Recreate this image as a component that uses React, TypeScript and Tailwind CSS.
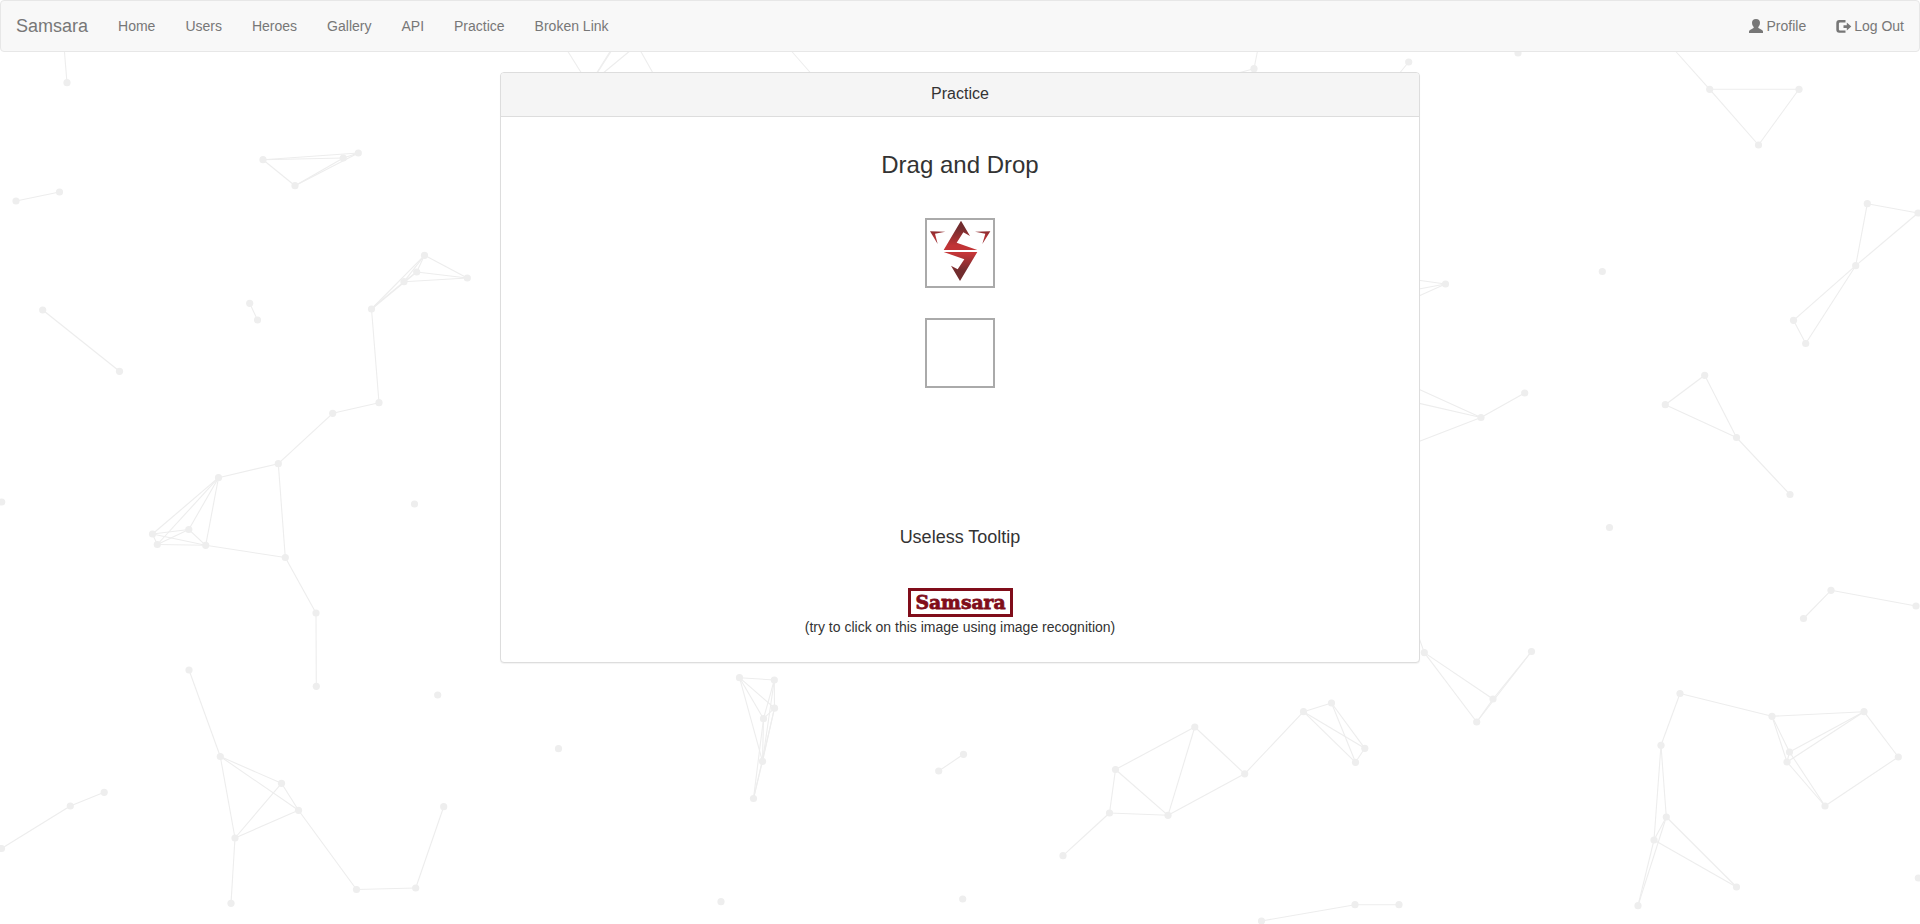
import React from "react";

type Point = [number, number];
type Segment = [number, number, number, number];

const nodes: Point[] = [
  [67, 82.7], [263, 159.7], [343.3, 158], [358.3, 153], [295, 185.7], [16, 201], [59.5, 192],
  [424.5, 255.3], [416.7, 272], [404, 281.7], [467.3, 278], [371.5, 309], [42.7, 310], [119.5, 371.3],
  [249.7, 303.3], [257.5, 320], [379, 402.7], [332.7, 413.3], [278.3, 463.7], [218.5, 477.7],
  [1.7, 502], [414.5, 504], [152.5, 534], [157.3, 544.5], [188.8, 529.5], [205.7, 545.3], [285.3, 557.5],
  [316, 613], [316.3, 686.3], [437.7, 695], [189, 670], [220.3, 756.5], [281.5, 783.3], [298.5, 810.3],
  [235, 838], [231, 903.3], [356.5, 889.5], [415.7, 888], [443.7, 806.7], [70.3, 806], [104.2, 792.3],
  [1.5, 848.5], [739.5, 677.7], [774.3, 680], [774.5, 708.2], [763.5, 718.7], [762.5, 761.3],
  [753.5, 798.5], [558.5, 748.7], [938.7, 771], [963.5, 754.3], [721, 901.7], [962.7, 899],
  [1194.8, 727], [1115.5, 769.5], [1109.5, 813], [1168, 815.3], [1063, 855.7], [1244.7, 773.8],
  [1303.5, 711.7], [1331.5, 703], [1364.8, 748.3], [1355.5, 762.3], [1261.5, 921], [1355, 904.7],
  [1399, 904.7], [1424.3, 652.6], [1518, 53], [1709.7, 89.3], [1799, 89.3], [1758.5, 145],
  [1867.3, 203.7], [1918, 213], [1855.7, 265.7], [1793.5, 320.3], [1805.7, 343.5], [1602.3, 271.5],
  [1445.5, 284], [1481, 417.5], [1524.7, 393], [1704.7, 375.3], [1665.3, 404.7], [1736.5, 437.5],
  [1790, 494.5], [1609.5, 527.5], [1831, 590.3], [1803.5, 618.5], [1916, 606], [1531.5, 651.5],
  [1493, 699], [1476.7, 722], [1680, 693.5], [1661, 745.3], [1772, 716.3], [1864, 711.7],
  [1898.3, 757], [1789.5, 752], [1787, 762], [1825, 806], [1666.3, 817], [1654, 840], [1736.5, 887],
  [1638, 905.7], [1918.3, 878], [1254, 68.7], [1408.7, 62],
];

// Pairs of indices into `nodes`.
const links: Point[] = [
  [1, 2], [1, 3], [1, 4], [2, 3], [2, 4], [3, 4], [5, 6],
  [7, 8], [7, 9], [7, 10], [7, 11], [8, 9], [8, 10], [8, 11], [9, 10], [9, 11],
  [12, 13], [14, 15], [11, 16], [16, 17], [17, 18], [18, 19], [18, 26],
  [19, 22], [19, 23], [19, 24], [19, 25], [22, 23], [22, 24], [22, 25], [23, 24], [23, 25], [24, 25],
  [25, 26], [26, 27], [27, 28], [30, 31], [31, 32], [31, 33], [31, 34], [32, 33], [32, 34], [33, 34],
  [34, 35], [33, 36], [36, 37], [37, 38], [39, 40], [39, 41],
  [42, 43], [42, 44], [42, 45], [42, 46], [43, 44], [43, 45], [43, 46], [44, 45], [44, 46], [44, 47],
  [45, 46], [45, 47], [46, 47], [49, 50],
  [53, 54], [53, 56], [53, 58], [54, 55], [54, 56], [55, 56], [55, 57], [56, 58], [58, 59],
  [59, 60], [59, 61], [59, 62], [60, 61], [60, 62], [61, 62], [63, 64], [64, 65],
  [68, 69], [68, 70], [69, 70], [71, 72], [71, 73], [72, 73], [73, 74], [73, 75], [74, 75],
  [78, 79], [80, 81], [80, 82], [81, 82], [82, 83], [85, 86], [85, 87],
  [66, 89], [66, 90], [88, 89], [88, 90], [89, 90],
  [91, 92], [91, 93], [93, 94], [93, 96], [93, 97], [94, 95], [94, 96], [94, 97], [95, 98],
  [96, 97], [96, 98], [97, 98], [92, 99], [92, 100], [99, 100], [99, 101], [99, 102], [100, 101], [100, 102],
];

// Edges whose far end is hidden behind the navbar or the panel.
const looseEnds: Segment[] = [
  [64.3, 50, 67, 82.7], [567, 50, 582, 74], [611, 50, 596, 74], [612, 50, 596.5, 74],
  [631, 50, 602, 74], [640, 50, 653.5, 74], [790.5, 50, 811.5, 74],
  [1257.7, 50, 1254, 68.7], [1254, 68.7, 1238, 73], [1408.7, 62, 1398, 75],
  [1674.5, 50, 1709.7, 89.3], [1415, 279.7, 1445.5, 284], [1415, 289.8, 1445.5, 284],
  [1415, 297.8, 1445.5, 284], [1415, 387.6, 1481, 417.5], [1415, 402.4, 1481, 417.5],
  [1415, 443, 1481, 417.5], [1418, 635, 1424.3, 652.6],
];

function Constellation() {
  return (
    <svg className="absolute inset-0 h-full w-full" viewBox="0 0 1920 924" aria-hidden="true">
      <g stroke="#ededed" strokeWidth="1.1">
        {links.map(([a, b], i) => (
          <line key={i} x1={nodes[a][0]} y1={nodes[a][1]} x2={nodes[b][0]} y2={nodes[b][1]} />
        ))}
        {looseEnds.map(([x1, y1, x2, y2], i) => (
          <line key={i} x1={x1} y1={y1} x2={x2} y2={y2} />
        ))}
      </g>
      <g fill="#eeeeee">
        {nodes.map(([x, y], i) => (
          <circle key={i} cx={x} cy={y} r="3.6" />
        ))}
      </g>
    </svg>
  );
}

function UserIcon() {
  return (
    <svg className="mr-[3px] h-3.5 w-3.5" viewBox="0 0 14 14" fill="currentColor">
      <path d="M7 0C4.300 0 3 1.500 3 3.700c0 1.200.3 2.300.9 3.200.5.700.9 1 .9 1.600 0 .5-.4.800-1.100 1.100L1 10.900C.3 11.300 0 11.700 0 12.400V14h14v-1.600c0-.7-.3-1.100-1-1.500l-2.700-1.300C9.600 9.300 9.200 9 9.200 8.500c0-.6.4-.9.900-1.600.6-.9.900-2 .9-3.200C11 1.500 9.700 0 7 0z" />
    </svg>
  );
}

function LogOutIcon() {
  return (
    <svg className="mr-1 h-3.5 w-3.5 overflow-visible" viewBox="0 0 14 14" fill="currentColor">
      <path d="M9.500 1H3.300Q.3 1 .3 4v6.800Q.3 13.800 3.300 13.800h6.200V11.500H4Q2.900 11.500 2.900 10.400V4.500Q2.900 3.400 4 3.400h5.500z" />
      <path d="M10.800 3.500 15.300 7.600 10.800 11.600V9H7.500V6.200h3.300z" />
    </svg>
  );
}

function DragLogo() {
  return (
    <svg className="h-[66px] w-[66px]" viewBox="81 60 198 198">
      <defs>
        <linearGradient id="upper" x1="0" y1="0" x2="0" y2="1">
          <stop offset="0.250" stopColor="#712c2e" />
          <stop offset="0.850" stopColor="#c13436" />
        </linearGradient>
        <linearGradient id="lower" x1="0" y1="0" x2="0" y2="1">
          <stop offset="0.050" stopColor="#c53638" />
          <stop offset="0.650" stopColor="#712c2e" />
        </linearGradient>
        <linearGradient id="wing" x1="0" y1="0" x2="0" y2="1">
          <stop offset="0" stopColor="#8c2c2f" />
          <stop offset="0.500" stopColor="#b53235" />
          <stop offset="1" stopColor="#8c2c2f" />
        </linearGradient>
      </defs>
      <path fill="url(#upper)" d="M183 62 210 108 190 97 170 128 232 150H131z" />
      <path fill="url(#lower)" d="M131 156H232L180 243 153 197 173 208 193 178z" />
      <path fill="url(#wing)" d="M90 94 136 95 105 101 113 132z" />
      <path fill="url(#wing)" d="M271 94 225 95 256 101 247 132z" />
    </svg>
  );
}

const menu = ["Home", "Users", "Heroes", "Gallery", "API", "Practice", "Broken Link"];

export default function App() {
  return (
    <div className="relative h-[924px] w-full overflow-hidden bg-white font-['Liberation_Sans',Arial,sans-serif] text-sm leading-5 text-[#333333]">
      <Constellation />
      <div className="relative">
        <nav className="mb-5 flex h-[52px] items-center justify-between rounded border border-[#e7e7e7] bg-[#f8f8f8] px-[15px] text-[#777777]">
          <div className="flex items-center">
            <a className="mr-[15px] text-lg leading-5">Samsara</a>
            <ul className="flex">
              {menu.map((item) => (
                <li key={item} className="px-[15px]">{item}</li>
              ))}
            </ul>
          </div>
          <ul className="flex gap-[30px]">
            <li className="flex items-center"><UserIcon />Profile</li>
            <li className="flex items-center"><LogOutIcon />Log Out</li>
          </ul>
        </nav>

        <main className="mx-auto flex h-[591px] w-[920px] flex-col rounded border border-[#dddddd] bg-white text-center shadow-[0_1px_1px_rgba(0,0,0,0.05)]">
          <header className="flex h-11 shrink-0 items-center justify-center rounded-t-[3px] border-b border-[#dddddd] bg-[#f5f5f5] pb-0.5 text-base">
            Practice
          </header>
          <section className="flex flex-col items-center pt-[35px]">
            <h3 className="text-2xl leading-[26px]">Drag and Drop</h3>
            <div className="mt-10 h-[70px] w-[70px] border-2 border-[#aaaaaa]">
              <DragLogo />
            </div>
            <div className="mt-[30px] h-[70px] w-[70px] border-2 border-[#aaaaaa]" />
          </section>
          <section className="mt-[139px] flex flex-col items-center">
            <h4 className="text-lg leading-5">Useless Tooltip</h4>
            <div className="mt-[41px] flex h-[29px] w-[105px] items-center justify-center border-[3px] border-[#800d1a] font-['DejaVu_Serif',serif] text-[19px] leading-none font-bold text-[#800d1a]">
              <svg className="h-[23px] w-[99px]" viewBox="0 0 99 23">
                <text x="4.500" y="18" textLength="90" lengthAdjust="spacingAndGlyphs" fill="#800d1a" stroke="#800d1a" strokeWidth="0.800">Samsara</text>
              </svg>
            </div>
            <p>(try to click on this image using image recognition)</p>
          </section>
        </main>
      </div>
    </div>
  );
}
